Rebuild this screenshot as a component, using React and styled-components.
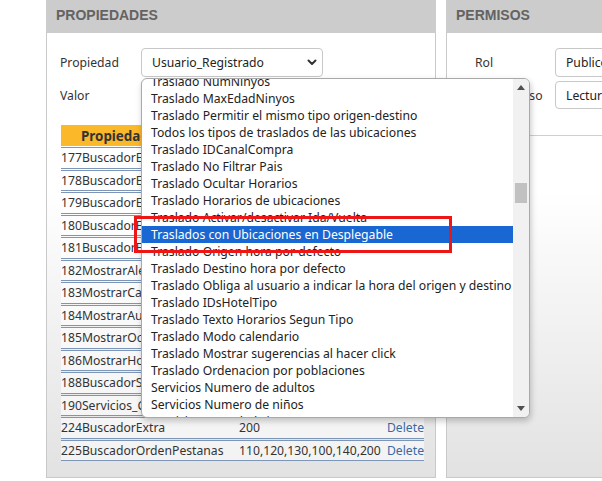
import React, { useLayoutEffect, useRef } from "react";
import styled, { createGlobalStyle } from "styled-components";

const Global = createGlobalStyle`
  html, body { margin: 0; padding: 0; background: #fff; }
  body {
    width: 602px; height: 481px; overflow: hidden;
    font-family: "Noto Sans", "Segoe UI", Arial, sans-serif;
    font-size: 12.2px; color: #333;
  }
`;

const Page = styled.div`
  position: relative;
  display: flex;
  gap: 10px;
  padding-left: 46px;
  height: 481px;
  overflow: hidden;
`;

const Panel = styled.section`
  flex: 0 0 ${(p) => p.$w}px;
  height: 478px;
  box-sizing: border-box;
  display: flex;
  flex-direction: column;
  border: 1px solid #c9c9c9;
  border-top: 0;
  background: linear-gradient(#fff 40%, #e2e2e2);
`;

const PanelHeader = styled.h2`
  margin: 0 -1px;
  height: 33px;
  flex: 0 0 33px;
  box-sizing: border-box;
  display: flex;
  align-items: center;
  padding: 0 0 3px 10px;
  background: #cccccc;
  color: #636363;
  font-family: "Liberation Sans", Arial, sans-serif;
  font-weight: bold;
  font-size: 14px;
`;

const FormGrid = styled.div`
  display: grid;
  grid-template-columns: ${(p) => p.$label}px 1fr;
  row-gap: 4px;
  align-items: center;
  padding: 15px 0 0 ${(p) => p.$pad}px;
`;

const FormArea = styled.div`
  background: #fff;
  height: 103px;
  flex: 0 0 103px;
  box-sizing: border-box;
  border-bottom: 1px solid #cfcfcf;
`;

const Label = styled.label`
  color: #333;
  font-size: 12.2px;
`;

const SelectBox = styled.div`
  height: ${(p) => p.$h || 29}px;
  box-sizing: border-box;
  width: ${(p) => p.$w}px;
  display: flex;
  align-items: center;
  justify-content: space-between;
  padding: 0 5px 0 10px;
  border: 1px solid #c8c8c8;
  border-radius: 4px;
  background: #fff;
  color: #222;
  font-size: 12.2px;
`;

const Chevron = () => (
  <svg width="10" height="7" viewBox="0 0 10 7">
    <path d="M1.5 1.5 L5 5 L8.5 1.5" fill="none" stroke="#333" strokeWidth="2" strokeLinecap="round" strokeLinejoin="round" />
  </svg>
);

const Table = styled.table`
  margin: 15px 0 0 14px;
  width: 363px;
  border-collapse: separate;
  border-spacing: 0 1px;
  table-layout: fixed;
  font-size: 12.2px;
`;

const Th = styled.th`
  height: 21px;
  padding: 0 0 0 ${(p) => p.$pad || 0}px;
  background: #fbb829;
  color: #333;
  font-weight: bold;
  font-size: 13.4px;
  text-align: left;
`;

const Td = styled.td`
  line-height: 19.5px;
  padding: 0 0 0 ${(p) => p.$pad || 0}px;
  border-top: 1px solid #7d95b6;
  border-bottom: 1px solid #7d95b6;
  background: rgba(255, 255, 255, 0.55);
  color: #333;
  white-space: nowrap;
  overflow: hidden;
  text-align: ${(p) => p.$align || "left"};
`;

const DelLink = styled.a`
  color: #386aa6;
  text-decoration: none;
`;

const Dropdown = styled.div`
  position: absolute;
  left: 141px;
  top: 78px;
  width: 389px;
  height: 340px;
  box-sizing: border-box;
  display: flex;
  border: 1px solid #a9a9a9;
  border-radius: 6px;
  background: #fff;
  overflow: hidden;
  box-shadow: 1px 3px 6px rgba(0, 0, 0, 0.22);
`;

const List = styled.ul`
  flex: 1;
  margin: 0;
  padding: 0;
  list-style: none;
  overflow: hidden;
`;

const Item = styled.li`
  height: 17px;
  line-height: 17px;
  padding-left: 9px;
  white-space: nowrap;
  font-size: 12.2px;
  color: ${(p) => (p.$sel ? "#fff" : "#222")};
  background: ${(p) => (p.$sel ? "#1967d2" : "transparent")};
`;

const ScrollBar = styled.div`
  flex: 0 0 16px;
  display: flex;
  flex-direction: column;
  align-items: center;
  background: #f1f1f1;
`;

const ScrollArrow = styled.div`
  flex: 0 0 17px;
  display: flex;
  align-items: center;
  justify-content: center;
`;

const Track = styled.div`
  flex: 1;
  width: 100%;
  display: flex;
  flex-direction: column;
  align-items: center;
  padding-top: ${(p) => p.$offset}px;
  box-sizing: border-box;
`;

const Thumb = styled.div`
  width: 12px;
  height: 20px;
  background: #c1c1c1;
`;

const Annotation = styled.div`
  position: absolute;
  left: 134px;
  top: 216px;
  width: 318px;
  height: 37px;
  box-sizing: border-box;
  border: 3.5px solid #ec1616;
  pointer-events: none;
`;

const Tri = ({ up }) => (
  <svg width="8" height="5" viewBox="0 0 8 5">
    <path d={up ? "M0 5 L4 0 L8 5 Z" : "M0 0 L4 5 L8 0 Z"} fill="#505050" />
  </svg>
);

const above = ["Traslado NumAdultos", "Traslado MaxEdadAdultos"];

const items = [
  "Traslado NumNinyos",
  "Traslado MaxEdadNinyos",
  "Traslado Permitir el mismo tipo origen-destino",
  "Todos los tipos de traslados de las ubicaciones",
  "Traslado IDCanalCompra",
  "Traslado No Filtrar Pais",
  "Traslado Ocultar Horarios",
  "Traslado Horarios de ubicaciones",
  "Traslado Activar/desactivar Ida/Vuelta",
  "Traslados con Ubicaciones en Desplegable",
  "Traslado Origen hora por defecto",
  "Traslado Destino hora por defecto",
  "Traslado Obliga al usuario a indicar la hora del origen y destino",
  "Traslado IDsHotelTipo",
  "Traslado Texto Horarios Segun Tipo",
  "Traslado Modo calendario",
  "Traslado Mostrar sugerencias al hacer click",
  "Traslado Ordenacion por poblaciones",
  "Servicios Numero de adultos",
  "Servicios Numero de niños",
  "Servicios MaxEdadNinyos",
  "Servicios Categorias",
  "Servicios Ordenacion",
];

const rows = [
  ["177BuscadorEdadMaxima", "17"],
  ["178BuscadorEdadMinima", "2"],
  ["179BuscadorEstrellas", "1"],
  ["180BuscadorEscalas", "0"],
  ["181BuscadorExtras", "1"],
  ["182MostrarAlerta", "0"],
  ["183MostrarCalendario", "1"],
  ["184MostrarAutocompletar", "1"],
  ["185MostrarOcupacion", "0"],
  ["186MostrarHorarios", "1"],
  ["188BuscadorServicios", "1"],
  ["190Servicios_Categorias", "1"],
  ["224BuscadorExtra", "200"],
  ["225BuscadorOrdenPestanas", "110,120,130,100,140,200"],
];

export default function App() {
  const listRef = useRef(null);
  useLayoutEffect(() => {
    if (listRef.current) listRef.current.scrollTop = above.length * 17 + 6;
  }, []);

  return (
    <>
      <Global />
      <Page>
        <Panel $w={390}>
          <PanelHeader>PROPIEDADES</PanelHeader>
          <FormGrid $label={81} $pad={13}>
            <Label>Propiedad</Label>
            <SelectBox $w={182}>
              <span>Usuario_Registrado</span>
              <Chevron />
            </SelectBox>
            <Label>Valor</Label>
            <SelectBox $w={182} $h={28} />
          </FormGrid>
          <Table>
            <colgroup>
              <col style={{ width: 177 }} />
              <col style={{ width: 148 }} />
              <col style={{ width: 38 }} />
            </colgroup>
            <thead>
              <tr>
                <Th $pad={20}>Propiedad</Th>
                <Th $pad={50}>Valor</Th>
                <Th />
              </tr>
            </thead>
            <tbody>
              {rows.map(([n, v]) => (
                <tr key={n}>
                  <Td>{n}</Td>
                  <Td $pad={1}>{v}</Td>
                  <Td $align="right">
                    <DelLink href="#">Delete</DelLink>
                  </Td>
                </tr>
              ))}
            </tbody>
          </Table>
        </Panel>
        <Panel $w={300}>
          <PanelHeader>PERMISOS</PanelHeader>
          <FormArea>
            <FormGrid $label={80} $pad={28}>
              <Label>Rol</Label>
              <SelectBox $w={200}>
                <span>Publico</span>
              </SelectBox>
              <Label>Tipo Acceso</Label>
              <SelectBox $w={200} $h={28}>
                <span>Lectura</span>
              </SelectBox>
            </FormGrid>
          </FormArea>
        </Panel>

        <Dropdown>
          <List ref={listRef}>
            {[...above, ...items].map((t) => (
              <Item key={t} $sel={t === "Traslados con Ubicaciones en Desplegable"}>
                {t}
              </Item>
            ))}
          </List>
          <ScrollBar>
            <ScrollArrow>
              <Tri up />
            </ScrollArrow>
            <Track $offset={87}>
              <Thumb />
            </Track>
            <ScrollArrow>
              <Tri />
            </ScrollArrow>
          </ScrollBar>
        </Dropdown>
        <Annotation />
      </Page>
    </>
  );
}
